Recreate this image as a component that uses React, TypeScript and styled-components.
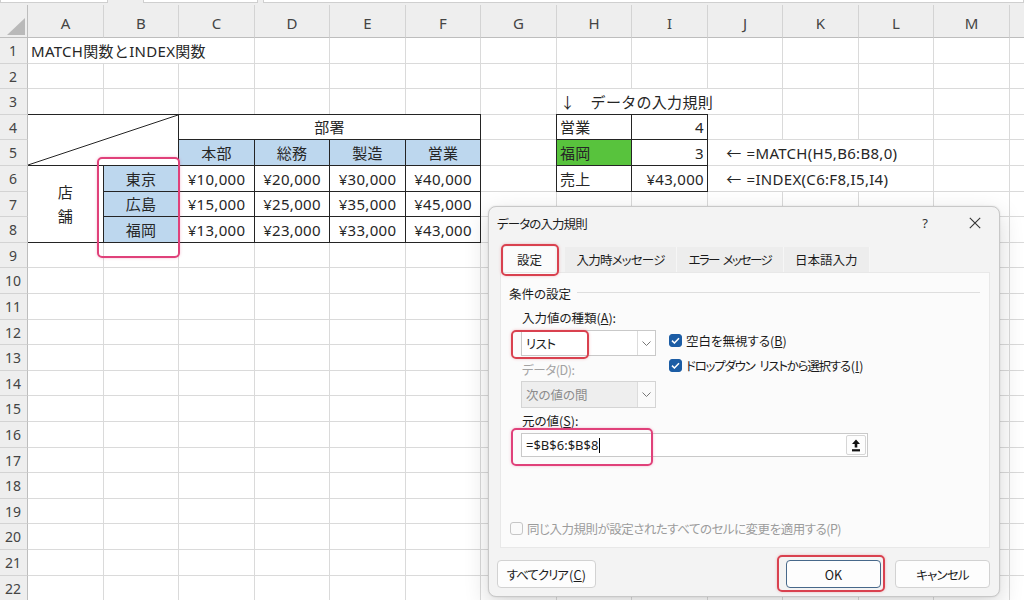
import React from "react";
import styled, { createGlobalStyle } from "styled-components";

const GlobalStyle = createGlobalStyle`
  html, body { margin: 0; padding: 0; background: #ffffff; }
  body { overflow: hidden; font-family: "Noto Sans", "Noto Sans CJK JP", sans-serif; }
`;

const DARK = "#242424";
const GRID = "#dadada";
const HEAD_BG = "#eeeeee";
const HEAD_LINE = "#d3d3d3";
const HEAD_EDGE = "#bdbdbd";
const BLUE = "#bdd7ee";
const GREEN = "#58c33d";

const COL_NAMES = ["A", "B", "C", "D", "E", "F", "G", "H", "I", "J", "K", "L", "M", ""];
const colEdge = (i: number) => Math.round(28 + 75.5 * i);
const rowEdge = (i: number) => Math.round(38 + 25.6 * i);
const COL_W = COL_NAMES.map((_, i) => colEdge(i + 1) - colEdge(i));
const ROW_H = Array.from({ length: 22 }, (_, i) => rowEdge(i + 1) - rowEdge(i));

type Align = "left" | "center" | "right";
type Spec = {
  r: number;
  c: number;
  rs?: number;
  cs?: number;
  text?: React.ReactNode;
  align?: Align;
  bg?: string;
  dark?: boolean;
  top?: boolean;
  left?: boolean;
  diag?: boolean;
  lines?: string[];
  highlight?: boolean;
};

const Jp = styled.span<{ $gap?: number }>`
  font-family: "Noto Sans CJK JP", sans-serif;
  margin-right: ${(p) => p.$gap ?? 0}px;
`;

const SPECS: Spec[] = [
  { r: 1, c: 1, cs: 3, text: "MATCH関数とINDEX関数", align: "left" },
  {
    r: 3,
    c: 8,
    cs: 3,
    text: (
      <>
        <Jp>↓　</Jp>データの入力規則
      </>
    ),
    align: "left",
  },
  { r: 4, c: 1, rs: 2, cs: 2, dark: true, top: true, diag: true },
  { r: 4, c: 3, cs: 4, dark: true, top: true, text: "部署", align: "center" },
  { r: 4, c: 8, dark: true, top: true, left: true, text: "営業", align: "left" },
  { r: 4, c: 9, dark: true, top: true, text: "4", align: "right" },
  { r: 5, c: 3, dark: true, bg: BLUE, text: "本部", align: "center" },
  { r: 5, c: 4, dark: true, bg: BLUE, text: "総務", align: "center" },
  { r: 5, c: 5, dark: true, bg: BLUE, text: "製造", align: "center" },
  { r: 5, c: 6, dark: true, bg: BLUE, text: "営業", align: "center" },
  { r: 5, c: 8, dark: true, left: true, bg: GREEN, text: "福岡", align: "left" },
  { r: 5, c: 9, dark: true, text: "3", align: "right" },
  {
    r: 5,
    c: 10,
    cs: 3,
    text: (
      <>
        <Jp $gap={5}>　←</Jp>=MATCH(H5,B6:B8,0)
      </>
    ),
    align: "left",
  },
  { r: 6, c: 1, rs: 3, dark: true, lines: ["店", "舗"] },
  { r: 6, c: 2, dark: true, bg: BLUE, text: "東京", align: "center", highlight: true },
  { r: 6, c: 3, dark: true, text: "¥10,000", align: "center" },
  { r: 6, c: 4, dark: true, text: "¥20,000", align: "center" },
  { r: 6, c: 5, dark: true, text: "¥30,000", align: "center" },
  { r: 6, c: 6, dark: true, text: "¥40,000", align: "center" },
  { r: 6, c: 8, dark: true, left: true, text: "売上", align: "left" },
  { r: 6, c: 9, dark: true, text: "¥43,000", align: "right" },
  {
    r: 6,
    c: 10,
    cs: 3,
    text: (
      <>
        <Jp $gap={5}>　←</Jp>=INDEX(C6:F8,I5,I4)
      </>
    ),
    align: "left",
  },
  { r: 7, c: 2, dark: true, bg: BLUE, text: "広島", align: "center" },
  { r: 7, c: 3, dark: true, text: "¥15,000", align: "center" },
  { r: 7, c: 4, dark: true, text: "¥25,000", align: "center" },
  { r: 7, c: 5, dark: true, text: "¥35,000", align: "center" },
  { r: 7, c: 6, dark: true, text: "¥45,000", align: "center" },
  { r: 8, c: 2, dark: true, bg: BLUE, text: "福岡", align: "center" },
  { r: 8, c: 3, dark: true, text: "¥13,000", align: "center" },
  { r: 8, c: 4, dark: true, text: "¥23,000", align: "center" },
  { r: 8, c: 5, dark: true, text: "¥33,000", align: "center" },
  { r: 8, c: 6, dark: true, text: "¥43,000", align: "center" },
];

/* ---------- page ---------- */

const Screen = styled.div`
  position: relative;
  width: 1024px;
  height: 600px;
  overflow: hidden;
  background: #ffffff;
`;

const FormulaStrip = styled.div`
  height: 5px;
  display: flex;
  background: ${HEAD_BG};
`;

const StripBox = styled.div<{ $w: number; $ml: number }>`
  box-sizing: border-box;
  height: 3px;
  width: ${(p) => (p.$w ? `${p.$w}px` : "auto")};
  flex: ${(p) => (p.$w ? "none" : "1")};
  margin-left: ${(p) => p.$ml}px;
  background: #ffffff;
  border: 1px solid #cfcfcf;
  border-top: none;
`;

const Sheet = styled.div<{ $cols: string; $rows: string }>`
  display: grid;
  grid-template-columns: ${(p) => p.$cols};
  grid-template-rows: ${(p) => p.$rows};
  color: #262626;
`;

const Corner = styled.div`
  grid-row: 1;
  grid-column: 1;
  box-sizing: border-box;
  background: ${HEAD_BG};
  border-right: 1px solid ${HEAD_EDGE};
  border-bottom: 1px solid ${HEAD_EDGE};
  display: flex;
  align-items: flex-end;
  justify-content: flex-end;
  padding: 0 2px 2px 0;
`;

const ColHead = styled.div<{ $c: number }>`
  grid-row: 1;
  grid-column: ${(p) => p.$c + 1};
  box-sizing: border-box;
  background: ${HEAD_BG};
  border-right: 1px solid ${HEAD_LINE};
  border-bottom: 1px solid ${HEAD_EDGE};
  display: flex;
  align-items: center;
  justify-content: center;
  padding-top: 4px;
  font-size: 15px;
  color: #444444;
`;

const RowHead = styled.div<{ $r: number }>`
  grid-row: ${(p) => p.$r + 1};
  grid-column: 1;
  box-sizing: border-box;
  background: ${HEAD_BG};
  border-right: 1px solid ${HEAD_EDGE};
  border-bottom: 1px solid ${HEAD_LINE};
  display: flex;
  align-items: center;
  justify-content: center;
  padding-right: 1px;
  font-size: 14px;
  color: #444444;
`;

const justify = { left: "flex-start", center: "center", right: "flex-end" };

const Cell = styled.div<{
  $r: number;
  $c: number;
  $rs: number;
  $cs: number;
  $align: Align;
  $bg: string;
  $dark: boolean;
  $top: boolean;
  $left: boolean;
  $stack: boolean;
}>`
  grid-row: ${(p) => p.$r + 1} / span ${(p) => p.$rs};
  grid-column: ${(p) => p.$c + 1} / span ${(p) => p.$cs};
  position: relative;
  box-sizing: border-box;
  display: flex;
  flex-direction: ${(p) => (p.$stack ? "column" : "row")};
  align-items: center;
  justify-content: ${(p) => (p.$stack ? "center" : justify[p.$align])};
  padding: 0 3px 0 3px;
  background: ${(p) => p.$bg};
  border-right: 1px solid ${(p) => (p.$dark ? DARK : GRID)};
  border-bottom: 1px solid ${(p) => (p.$dark ? DARK : GRID)};
  box-shadow: ${(p) =>
    [
      p.$top ? `0 -1px 0 ${DARK}` : "",
      p.$left ? `-1px 0 0 ${DARK}` : "",
      p.$top && p.$left ? `-1px -1px 0 ${DARK}` : "",
    ]
      .filter(Boolean)
      .join(", ") || "none"};
  font-size: 15px;
  letter-spacing: 0.3px;
  line-height: 24px;
  white-space: nowrap;
`;

const Diagonal = styled.svg`
  position: absolute;
  inset: 0;
  width: 100%;
  height: 100%;
  overflow: visible;
`;

const Highlight = styled.span<{ $t: number; $l: number; $r: number; $b: number; $color: string }>`
  position: absolute;
  top: ${(p) => p.$t}px;
  left: ${(p) => p.$l}px;
  right: ${(p) => p.$r}px;
  bottom: ${(p) => p.$b}px;
  border: 2.5px solid ${(p) => p.$color};
  border-radius: 5px;
  box-shadow: 0 0 3px ${(p) => p.$color}55;
  pointer-events: none;
  z-index: 3;
`;

/* ---------- dialog ---------- */

const Dialog = styled.div`
  position: absolute;
  left: 488px;
  top: 206px;
  width: 512px;
  height: 391px;
  box-sizing: border-box;
  display: flex;
  flex-direction: column;
  background: #f3f3f3;
  border: 1px solid #c8c8c8;
  border-radius: 8px;
  box-shadow: 0 8px 24px rgba(0, 0, 0, 0.16), 0 0 2px rgba(0, 0, 0, 0.12);
  font-family: "Noto Sans CJK JP", "Noto Sans", sans-serif;
  font-feature-settings: "palt";
  font-size: 12.5px;
  color: #1b1b1b;
  z-index: 5;
`;

const Txt = styled.span<{ $ls?: number }>`
  letter-spacing: ${(p) => p.$ls ?? 0}px;
`;

const Key = styled.span`
  letter-spacing: 0.3px;
  margin-left: 1px;
`;

const WordGap = styled.span<{ $w: number }>`
  display: inline-block;
  width: ${(p) => p.$w}px;
`;

const TitleBar = styled.div`
  flex: none;
  height: 32px;
  display: flex;
  align-items: center;
  padding-left: 8px;
`;

const TitleActions = styled.div`
  margin-left: auto;
  display: flex;
  align-items: center;
  gap: 28px;
  padding-right: 12px;
`;

const HelpMark = styled.span`
  width: 20px;
  text-align: center;
  font-family: "Noto Sans", sans-serif;
  font-size: 13px;
  color: #333333;
`;

const CloseBox = styled.span`
  width: 24px;
  height: 20px;
  display: flex;
  align-items: center;
  justify-content: center;
`;

const TabBar = styled.div`
  flex: none;
  display: flex;
  margin: 8px 0 0 15px;
  height: 25px;
`;

const Tab = styled.div<{ $active?: boolean }>`
  position: relative;
  box-sizing: border-box;
  height: 25px;
  padding: 0 ${(p) => (p.$active ? 13 : 11.5)}px;
  margin-right: ${(p) => (p.$active ? 9 : 0)}px;
  display: flex;
  align-items: center;
  background: ${(p) => (p.$active ? "#fbfbfb" : "#ededed")};
  border-right: 1px solid #f6f6f6;
`;

const Panel = styled.div`
  flex: none;
  margin: 0 9px 0 11px;
  height: 276px;
  box-sizing: border-box;
  background: #fbfbfb;
  border: 1px solid #e8e8e8;
  padding: 11px 9px 11px 8px;
  display: flex;
  flex-direction: column;
`;

const GroupHeader = styled.div`
  height: 18px;
  display: flex;
  align-items: center;
  gap: 6px;
`;

const GroupRule = styled.div`
  flex: 1;
  height: 1px;
  background: #dedede;
  margin-top: -2px;
`;

const GroupBody = styled.div`
  padding-left: 12px;
  display: flex;
  flex-direction: column;
`;

const FieldLabel = styled.div<{ $mt: number; $mb: number; $disabled?: boolean }>`
  height: 16px;
  line-height: 16px;
  padding-left: 1px;
  margin-top: ${(p) => p.$mt}px;
  margin-bottom: ${(p) => p.$mb}px;
  color: ${(p) => (p.$disabled ? "#a3a3a3" : "#1b1b1b")};
`;

const TwoCol = styled.div`
  display: flex;
  align-items: flex-start;
`;

const LeftCol = styled.div`
  width: 135px;
  display: flex;
  flex-direction: column;
`;

const RightCol = styled.div`
  margin-left: 13px;
  display: flex;
  flex-direction: column;
  gap: 5px;
`;

const SelectBox = styled.div<{ $disabled?: boolean; $h: number }>`
  position: relative;
  box-sizing: border-box;
  height: ${(p) => p.$h}px;
  display: flex;
  background: ${(p) => (p.$disabled ? "#eeeeee" : "#ffffff")};
  border: 1px solid ${(p) => (p.$disabled ? "#d4d4d4" : "#c9c9c9")};
  color: ${(p) => (p.$disabled ? "#8c8c8c" : "#1b1b1b")};
`;

const SelectValue = styled.div`
  flex: 1;
  display: flex;
  align-items: center;
  padding-left: 4px;
`;

const ChevronBox = styled.div<{ $disabled?: boolean }>`
  width: 17px;
  display: flex;
  align-items: center;
  justify-content: center;
  border-left: 1px solid #dcdcdc;
  background: ${(p) => (p.$disabled ? "#fafafa" : "#ffffff")};
`;

const CheckRow = styled.div<{ $disabled?: boolean }>`
  height: 20px;
  display: flex;
  align-items: center;
  gap: 4px;
  color: ${(p) => (p.$disabled ? "#9c9c9c" : "#1b1b1b")};
`;

const CheckBox = styled.span<{ $checked?: boolean }>`
  box-sizing: border-box;
  width: 13px;
  height: 13px;
  border-radius: 3px;
  display: flex;
  align-items: center;
  justify-content: center;
  background: ${(p) => (p.$checked ? "#1c5da5" : "#fafafa")};
  border: 1px solid ${(p) => (p.$checked ? "#1c5da5" : "#c6c6c6")};
`;

const TextInput = styled.div`
  position: relative;
  box-sizing: border-box;
  width: 347px;
  height: 24px;
  display: flex;
  align-items: center;
  background: #ffffff;
  border: 1px solid #c9c9c9;
  padding-left: 4px;
  font-family: "Noto Sans", "Noto Sans CJK JP", sans-serif;
  font-size: 13px;
`;

const Caret = styled.span`
  width: 1px;
  height: 15px;
  background: #000000;
  margin-left: 1px;
`;

const RefButton = styled.span`
  margin-left: auto;
  margin-right: 1px;
  box-sizing: border-box;
  width: 20px;
  height: 20px;
  display: flex;
  align-items: center;
  justify-content: center;
  background: #fdfdfd;
  border: 1px solid #d6d6d6;
  border-radius: 2px;
`;

const BottomCheck = styled(CheckRow)`
  margin-top: auto;
  height: 16px;
  padding-left: 1px;
`;

const Footer = styled.div`
  flex: none;
  display: flex;
  align-items: flex-start;
  padding: 12px 9px 0 8px;
`;

const Button = styled.div<{ $w: number; $primary?: boolean; $ml?: number }>`
  position: relative;
  box-sizing: border-box;
  width: ${(p) => p.$w}px;
  height: 28px;
  margin-left: ${(p) => (p.$ml === undefined ? 0 : `${p.$ml}px`)};
  display: flex;
  align-items: center;
  justify-content: center;
  background: #fdfdfd;
  border: 1px solid ${(p) => (p.$primary ? "#47688a" : "#d2d2d2")};
  border-radius: 4px;
`;

const Spacer = styled.div`
  flex: 1;
`;

const Chevron = () => (
  <svg width="9" height="5" viewBox="0 0 9 5">
    <path d="M0.5 0.5 L4.5 4.5 L8.5 0.5" stroke="#777" strokeWidth="1" fill="none" />
  </svg>
);

const Tick = () => (
  <svg width="9" height="7" viewBox="0 0 9 7">
    <path d="M1 3.6 L3.4 6 L8 1.2" stroke="#ffffff" strokeWidth="1.5" fill="none" />
  </svg>
);

const CloseIcon = () => (
  <svg width="12" height="12" viewBox="0 0 12 12">
    <path d="M0.8 0.8 L11.2 11.2 M11.2 0.8 L0.8 11.2" stroke="#333" strokeWidth="1.1" fill="none" />
  </svg>
);

const CollapseIcon = () => (
  <svg width="10" height="13" viewBox="0 0 10 13">
    <path d="M5 0.5 L9 5 H6.3 V8.6 H3.7 V5 H1 Z" fill="#111" />
    <rect x="1" y="10.2" width="8" height="2.2" fill="#111" />
  </svg>
);

const CornerTriangle = () => (
  <svg width="18" height="17" viewBox="0 0 18 17">
    <path d="M18 0 L18 17 L0 17 Z" fill="#b9b9b9" />
  </svg>
);

const RED = "#d9414f";
const PINK = "#e0417a";

const ValidationDialog = () => (
  <Dialog>
    <TitleBar>
      <Txt $ls={-0.9}>データの入力規則</Txt>
      <TitleActions>
        <HelpMark>?</HelpMark>
        <CloseBox>
          <CloseIcon />
        </CloseBox>
      </TitleActions>
    </TitleBar>
    <TabBar>
      <Tab $active>
        設定
        <Highlight $t={-3} $l={-3} $r={-4} $b={-4} $color={RED} />
      </Tab>
      <Tab>
        <Txt $ls={-0.8}>入力時メッセージ</Txt>
      </Tab>
      <Tab>
        <Txt $ls={-1.7}>
          エラー
          <WordGap $w={4} />
          メッセージ
        </Txt>
      </Tab>
      <Tab>日本語入力</Tab>
    </TabBar>
    <Panel>
      <GroupHeader>
        <span>条件の設定</span>
        <GroupRule />
      </GroupHeader>
      <GroupBody>
        <FieldLabel $mt={8} $mb={4}>
          入力値の種類(<u>A</u>):
        </FieldLabel>
        <TwoCol>
          <LeftCol>
            <SelectBox $h={26}>
              <SelectValue>
                <Txt $ls={-0.5}>リスト</Txt>
              </SelectValue>
              <ChevronBox>
                <Chevron />
              </ChevronBox>
              <Highlight $t={-1} $l={-11} $r={66} $b={-4} $color={RED} />
            </SelectBox>
            <FieldLabel $mt={6} $mb={3} $disabled>
              <Txt $ls={-0.4}>データ(D):</Txt>
            </FieldLabel>
            <SelectBox $h={27} $disabled>
              <SelectValue>次の値の間</SelectValue>
              <ChevronBox $disabled>
                <Chevron />
              </ChevronBox>
            </SelectBox>
          </LeftCol>
          <RightCol>
            <CheckRow>
              <CheckBox $checked>
                <Tick />
              </CheckBox>
              <span>
                空白を無視する(<u>B</u>)
              </span>
            </CheckRow>
            <CheckRow>
              <CheckBox $checked>
                <Tick />
              </CheckBox>
              <Txt $ls={-1.25}>
                ドロップダウン
                <WordGap $w={5} />
                リストから選択する
                <Key>
                  (<u>I</u>)
                </Key>
              </Txt>
            </CheckRow>
          </RightCol>
        </TwoCol>
        <FieldLabel $mt={5} $mb={4}>
          元の値(<u>S</u>):
        </FieldLabel>
        <TextInput>
          =$B$6:$B$8
          <Caret />
          <RefButton>
            <CollapseIcon />
          </RefButton>
          <Highlight $t={-6} $l={-11} $r={214} $b={-10} $color={PINK} />
        </TextInput>
      </GroupBody>
      <BottomCheck $disabled>
        <CheckBox />
        <Txt $ls={-0.5}>同じ入力規則が設定されたすべてのセルに変更を適用する(P)</Txt>
      </BottomCheck>
    </Panel>
    <Footer>
      <Button $w={99}>
        <Txt $ls={-1}>
          すべてクリア
          <Key>
            (<u>C</u>)
          </Key>
        </Txt>
      </Button>
      <Spacer />
      <Button $w={95} $primary>
        OK
        <Highlight $t={-6} $l={-10} $r={-5} $b={-5} $color={RED} />
      </Button>
      <Button $w={95} $ml={14}>
        <Txt $ls={-0.8}>キャンセル</Txt>
      </Button>
    </Footer>
  </Dialog>
);

const renderCell = (s: Spec) => (
  <Cell
    key={`${s.r}-${s.c}`}
    $r={s.r}
    $c={s.c}
    $rs={s.rs ?? 1}
    $cs={s.cs ?? 1}
    $align={s.align ?? "left"}
    $bg={s.bg ?? "transparent"}
    $dark={!!s.dark}
    $top={!!s.top}
    $left={!!s.left}
    $stack={!!s.lines}
  >
    {s.diag && (
      <Diagonal viewBox="0 0 100 100" preserveAspectRatio="none">
        <line x1="0" y1="100" x2="100" y2="0" stroke={DARK} strokeWidth="1" vectorEffect="non-scaling-stroke" />
      </Diagonal>
    )}
    {s.lines ? s.lines.map((l) => <span key={l}>{l}</span>) : s.text}
    {s.highlight && <Highlight $t={-9} $l={-7} $r={-2} $b={-67} $color={PINK} />}
  </Cell>
);

export default function App() {
  const anchors = new Map<string, Spec>();
  const covered = new Set<string>();
  SPECS.forEach((s) => {
    anchors.set(`${s.r},${s.c}`, s);
    for (let rr = s.r; rr < s.r + (s.rs ?? 1); rr++)
      for (let cc = s.c; cc < s.c + (s.cs ?? 1); cc++)
        if (rr !== s.r || cc !== s.c) covered.add(`${rr},${cc}`);
  });

  const items: React.ReactNode[] = [];
  for (let r = 1; r <= 22; r++) {
    items.push(
      <RowHead key={`rh-${r}`} $r={r}>
        {r}
      </RowHead>
    );
    for (let c = 1; c <= COL_NAMES.length; c++) {
      const k = `${r},${c}`;
      if (covered.has(k)) continue;
      items.push(renderCell(anchors.get(k) ?? { r, c }));
    }
  }

  const cols = `28px ${COL_W.map((w) => `${w}px`).join(" ")}`;
  const rows = `33px ${ROW_H.map((h) => `${h}px`).join(" ")}`;

  return (
    <>
      <GlobalStyle />
      <Screen>
        <FormulaStrip>
          <StripBox $w={108} $ml={0} />
          <StripBox $w={115} $ml={35} />
          <StripBox $w={0} $ml={5} />
        </FormulaStrip>
        <Sheet $cols={cols} $rows={rows}>
          <Corner>
            <CornerTriangle />
          </Corner>
          {COL_NAMES.map((n, i) => (
            <ColHead key={`ch-${i}`} $c={i + 1}>
              {n}
            </ColHead>
          ))}
          {items}
        </Sheet>
        <ValidationDialog />
      </Screen>
    </>
  );
}
